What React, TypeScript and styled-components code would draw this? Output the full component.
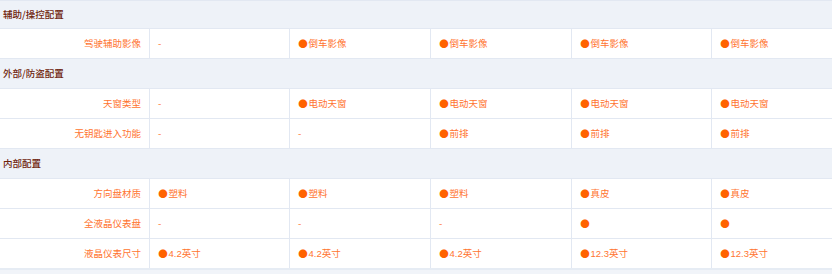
import React from 'react'
import styled, { createGlobalStyle } from 'styled-components'

const GlobalStyle = createGlobalStyle`
  html, body {
    margin: 0;
    padding: 0;
    background: #fff;
    overflow: hidden;
  }
  body {
    font-family: "Liberation Sans", "Noto Sans CJK SC", sans-serif;
  }
`

const Sheet = styled.div`
  width: 852px;
  font-size: 9.5px;
  line-height: 1;
`

const SectionTitle = styled.div`
  display: flex;
  align-items: center;
  box-sizing: border-box;
  height: 30px;
  padding-left: 3px;
  border-top: 1px solid #e2e8f2;
  background: #eef2f8;
  color: #6e240c;
  font-family: "Noto Sans CJK SC", sans-serif;
  font-weight: 500;

  &:first-child {
    height: 28px;
  }
`

const Row = styled.div`
  display: grid;
  grid-template-columns: 149px 140px 141px 141px 140px 141px;
  box-sizing: border-box;
  height: 30px;
  border-top: 1px solid #e2e8f2;
  background: #fff;
`

const Label = styled.div`
  display: flex;
  align-items: center;
  justify-content: flex-end;
  padding-right: 8px;
  color: #ff7430;
  font-family: "Noto Sans CJK SC", sans-serif;
`

const Cell = styled.div`
  display: flex;
  align-items: center;
  padding-left: 8px;
  border-left: 1px solid #e2e8f2;
  color: #ff7430;
  font-family: "Noto Sans CJK SC", sans-serif;
`

const Num = styled.span`
  font-family: "Liberation Sans", sans-serif;
`

const Dot = styled.span`
  display: inline-block;
  width: 10px;
  margin-right: 0.5px;
  color: #ff6200;
  font-family: "Noto Sans CJK SC", sans-serif;
  font-size: 9.5px;
  text-align: center;
`

const Tail = styled.div`
  height: 8px;
  border-top: 2px solid #e6ecf4;
  background: #f1f4f9;
`

type Value = string | null

interface Item {
  label: string
  values: Value[]
}

interface Section {
  title: string
  items: Item[]
}

const sections: Section[] = [
  {
    title: '辅助/操控配置',
    items: [{ label: '驾驶辅助影像', values: [null, '●倒车影像', '●倒车影像', '●倒车影像', '●倒车影像'] }],
  },
  {
    title: '外部/防盗配置',
    items: [
      { label: '天窗类型', values: [null, '●电动天窗', '●电动天窗', '●电动天窗', '●电动天窗'] },
      { label: '无钥匙进入功能', values: [null, null, '●前排', '●前排', '●前排'] },
    ],
  },
  {
    title: '内部配置',
    items: [
      { label: '方向盘材质', values: ['●塑料', '●塑料', '●塑料', '●真皮', '●真皮'] },
      { label: '全液晶仪表盘', values: [null, null, null, '●', '●'] },
      { label: '液晶仪表尺寸', values: ['●4.2英寸', '●4.2英寸', '●4.2英寸', '●12.3英寸', '●12.3英寸'] },
    ],
  },
]

function CellValue({ value }: { value: Value }) {
  if (!value) return <Cell>-</Cell>
  const text = value.replace('●', '')
  const m = text.match(/^([\d.]+)(.*)$/)
  return (
    <Cell>
      <Dot>●</Dot>
      {m ? (
        <>
          <Num>{m[1]}</Num>
          {m[2]}
        </>
      ) : (
        text
      )}
    </Cell>
  )
}

export default function App() {
  return (
    <>
      <GlobalStyle />
      <Sheet>
        {sections.map((section) => (
          <React.Fragment key={section.title}>
            <SectionTitle>{section.title}</SectionTitle>
            {section.items.map((item) => (
              <Row key={item.label}>
                <Label>{item.label}</Label>
                {item.values.map((v, i) => (
                  <CellValue key={i} value={v} />
                ))}
              </Row>
            ))}
          </React.Fragment>
        ))}
        <Tail />
      </Sheet>
    </>
  )
}
